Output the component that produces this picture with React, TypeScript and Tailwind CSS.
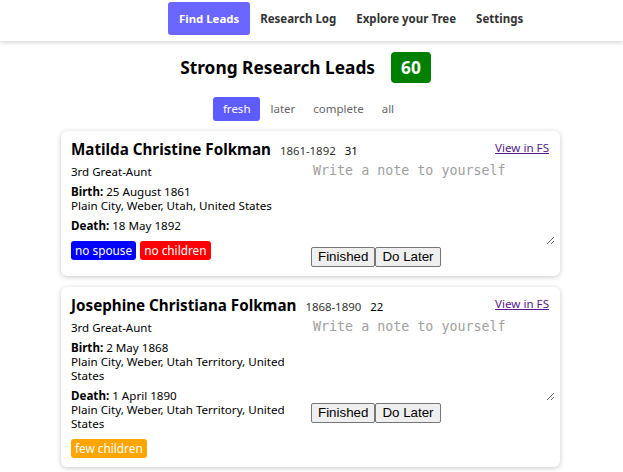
import React from 'react';

type Lead = {
  name: string;
  dates: string;
  age: number;
  relation: string;
  birthDate: string;
  birthPlace: string;
  deathDate: string;
  deathPlace?: string;
  tags: { label: string; color: string }[];
};

const leads: Lead[] = [
  {
    name: 'Matilda Christine Folkman',
    dates: '1861-1892',
    age: 31,
    relation: '3rd Great-Aunt',
    birthDate: '25 August 1861',
    birthPlace: 'Plain City, Weber, Utah, United States',
    deathDate: '18 May 1892',
    tags: [
      { label: 'no spouse', color: 'bg-[#0000ff]' },
      { label: 'no children', color: 'bg-[#ff0000]' },
    ],
  },
  {
    name: 'Josephine Christiana Folkman',
    dates: '1868-1890',
    age: 22,
    relation: '3rd Great-Aunt',
    birthDate: '2 May 1868',
    birthPlace: 'Plain City, Weber, Utah Territory, United States',
    deathDate: '1 April 1890',
    deathPlace: 'Plain City, Weber, Utah Territory, United States',
    tags: [{ label: 'few children', color: 'bg-[#ffa500]' }],
  },
];

function LeadCard({ lead }: { lead: Lead }) {
  return (
    <div className="bg-white rounded-md shadow-[0_1px_5px_rgba(0,0,0,0.22)] flex pl-[10px] pr-[11px] pt-[8px] pb-[9px]">
      {/* left side */}
      <div className="w-[240px] shrink-0 flex flex-col">
        <div className="flex items-baseline whitespace-nowrap leading-[20px]">
          <span className="font-bold text-[15.2px] text-black">{lead.name}</span>
          <span className="text-[11.4px] text-[#333] ml-[9px]">{lead.dates}</span>
          <span className="text-[11.4px] text-black ml-[9px]">{lead.age}</span>
        </div>
        <p className="text-[11.5px] mt-[1px] leading-[20px]">{lead.relation}</p>
        <div className="text-[11.6px] leading-[14px] mt-[3px]">
          <span className="font-bold">Birth:</span> {lead.birthDate}
          <br />
          {lead.birthPlace}
        </div>
        <div className="text-[11.6px] leading-[14px] mt-[6px]">
          <span className="font-bold">Death:</span> {lead.deathDate}
          {lead.deathPlace && (
            <>
              <br />
              {lead.deathPlace}
            </>
          )}
        </div>
        <div className="flex gap-[4px] mt-[8px]">
          {lead.tags.map((t) => (
            <span
              key={t.label}
              className={`${t.color} text-white text-[11.8px] leading-[19px] px-[4px] rounded-[3px]`}
            >
              {t.label}
            </span>
          ))}
        </div>
      </div>

      {/* right side */}
      <div className="flex-1 flex flex-col">
        <div className="flex justify-end">
          <a href="#" className="text-[11.6px] text-[#551a8b] underline leading-[16px] mt-[1px]">
            View in FS
          </a>
        </div>
        <textarea
          placeholder="Write a note to yourself"
          className="w-[calc(100%+6px)] h-[84px] mt-[5px] resize-y outline-none border-0 bg-transparent text-[13.33px] placeholder:text-[#a0a0a0] px-[2px] py-[2px] leading-[16px]"
          style={{ fontFamily: '"DejaVu Sans Mono", monospace' }}
        />
        <div className="flex mt-[2px]">
          {['Finished', 'Do Later'].map((b) => (
            <button
              key={b}
              className="text-[13.33px] leading-[16px] h-[20px] px-[6px] bg-[#efefef] border border-[#767676] rounded-[2px] text-black"
              style={{ fontFamily: '"Liberation Sans", Arial, sans-serif' }}
            >
              {b}
            </button>
          ))}
        </div>
      </div>
    </div>
  );
}

export default function App() {
  return (
    <div
      className="min-h-screen bg-white text-black"
      style={{ fontFamily: '"Noto Sans", "Open Sans", sans-serif' }}
    >
      {/* nav */}
      <div className="h-[41px] flex justify-start items-start pt-[2px] pl-[168px] shadow-[0_2px_4px_rgba(0,0,0,0.15)]">
        <button className="bg-[#6b66ff] text-white font-bold text-[11.4px] h-[33px] px-[11px] rounded-[3px]">
          Find Leads
        </button>
        <button className="text-[#333] font-bold text-[11.5px] h-[33px] px-[10px]">Research Log</button>
        <button className="text-[#333] font-bold text-[11.5px] h-[33px] px-[10px]">Explore your Tree</button>
        <button className="text-[#333] font-bold text-[11.5px] h-[33px] px-[10px]">Settings</button>
      </div>

      <div className="flex justify-center items-center gap-[16px] mt-[11px] pr-[12px]">
        <h1 className="font-bold text-[17.3px]">Strong Research Leads</h1>
        <span className="bg-[#008000] text-white font-bold text-[17.3px] rounded-[4px] px-[10px] h-[31px] flex items-center">
          60
        </span>
      </div>

      <div className="flex justify-center gap-[2px] mt-[14px] text-[11.5px] pr-[8px]">
        <span className="bg-[#5f5cff] text-white px-[10px] h-[24px] flex items-center rounded-[3px]">fresh</span>
        <span className="text-[#666] px-[8px] h-[24px] flex items-center">later</span>
        <span className="text-[#666] px-[8px] h-[24px] flex items-center">complete</span>
        <span className="text-[#666] px-[8px] h-[24px] flex items-center">all</span>
      </div>

      <div className="w-[501px] mx-auto mt-[10px] flex flex-col gap-[11px] pr-[2px]">
        {leads.map((l) => (
          <LeadCard key={l.name} lead={l} />
        ))}
      </div>
    </div>
  );
}
